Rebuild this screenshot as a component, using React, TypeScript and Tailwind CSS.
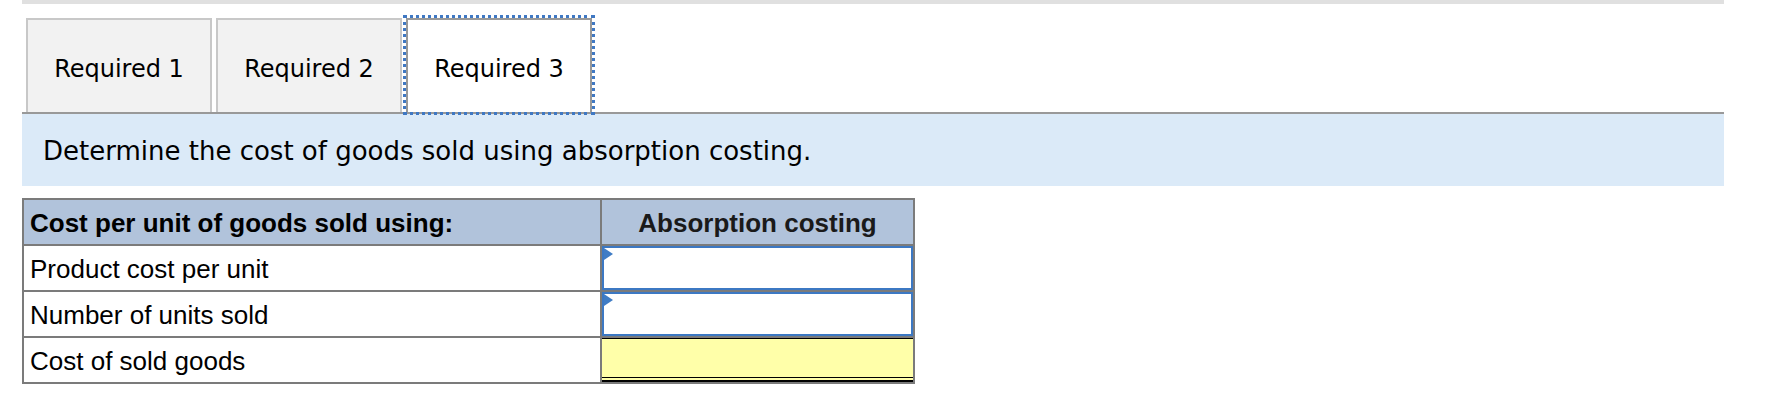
import React from "react";

const verdana = { fontFamily: '"DejaVu Sans", Verdana, sans-serif' };

function Tab({ label, active }: { label: string; active?: boolean }) {
  if (active) {
    return (
      <div className="relative h-[94px] w-[186px] border-2 border-b-0 border-[#999999] bg-white outline-[3px] outline-dotted outline-[#3f78c3] flex items-center justify-center pt-[5px]">
        <span className="text-[24px] text-black" style={verdana}>{label}</span>
      </div>
    );
  }
  return (
    <div className="h-[94px] w-[186px] border-2 border-b-0 border-[#c8c8c8] bg-[#f2f2f2] flex items-center justify-center pt-[5px]">
      <span className="text-[24px] text-black" style={verdana}>{label}</span>
    </div>
  );
}

function InputCell() {
  return (
    <div className="relative h-full w-full border-2 border-[#3c78c3] bg-white">
      <svg className="absolute left-0 top-0" width="10" height="12" viewBox="0 0 10 12">
        <polygon points="0,0 9,6 0,12" fill="#3f7cc5" />
      </svg>
    </div>
  );
}

export default function App() {
  const rowLabel = "pl-[6px] pt-[2px] flex items-center text-[26px] text-black";
  return (
    <div className="w-[1776px] h-[400px] bg-white" style={{ fontFamily: '"Liberation Sans", Arial, sans-serif' }}>
      <div className="ml-[22px] w-[1702px]">
        <div className="h-[4px] bg-[#e0e0e0]" />
        <div className="mt-[14px] pl-[4px] flex gap-[4px] items-end">
          <Tab label="Required 1" />
          <Tab label="Required 2" />
          <Tab label="Required 3" active />
        </div>
        <div className="h-[2px] bg-[#999999]" />
        <div className="h-[72px] bg-[#dbeaf8] flex items-center pl-[21px] pt-[2px]">
          <span className="text-[26px] text-black" style={verdana}>
            Determine the cost of goods sold using absorption costing.
          </span>
        </div>
        <div className="mt-[12px] w-[893px] border-2 border-[#7b7b7b]">
          <div className="flex h-[44px] bg-[#b1c3db]">
            <div className={rowLabel + " w-[576px] font-bold text-[#1a1a1a]"}>Cost per unit of goods sold using:</div>
            <div className="w-[2px] bg-[#7b7b7b]" />
            <div className="w-[311px] pt-[2px] flex items-center justify-center text-[26px] font-bold text-[#1a1a1a]">Absorption costing</div>
          </div>
          <div className="flex h-[46px] border-t-2 border-[#7b7b7b]">
            <div className={rowLabel + " w-[576px]"}>Product cost per unit</div>
            <div className="w-[2px] bg-[#7b7b7b]" />
            <div className="w-[311px]"><InputCell /></div>
          </div>
          <div className="flex h-[46px] border-t-2 border-[#7b7b7b]">
            <div className={rowLabel + " w-[576px]"}>Number of units sold</div>
            <div className="w-[2px] bg-[#7b7b7b]" />
            <div className="w-[311px]"><InputCell /></div>
          </div>
          <div className="flex h-[46px] border-t-2 border-[#7b7b7b]">
            <div className={rowLabel + " w-[576px]"}>Cost of sold goods</div>
            <div className="w-[2px] bg-[#7b7b7b]" />
            <div className="w-[311px] h-full flex flex-col bg-[#ffffa9]">
              <div className="h-px bg-black" />
              <div className="flex-1" />
              <div className="h-px bg-black" />
              <div className="h-[2px] bg-[#ffffa9]" />
              <div className="h-[2px] bg-black" />
            </div>
          </div>
        </div>
      </div>
    </div>
  );
}
